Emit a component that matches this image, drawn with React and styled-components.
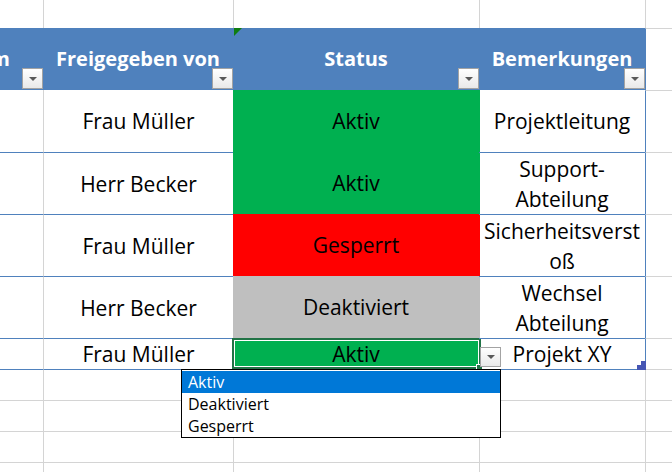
import React from "react";
import styled, { createGlobalStyle } from "styled-components";

const GRID = "#d4d4d4";
const BLUE = "#4f81bd";
const FILL = { Aktiv: "#00b050", Gesperrt: "#ff0000", Deaktiviert: "#bfbfbf" };

const rows = [
  { by: "Frau Müller", status: "Aktiv", note: ["Projektleitung"] },
  { by: "Herr Becker", status: "Aktiv", note: ["Support-", "Abteilung"] },
  { by: "Frau Müller", status: "Gesperrt", note: ["Sicherheitsverst", "oß"] },
  { by: "Herr Becker", status: "Deaktiviert", note: ["Wechsel", "Abteilung"] },
  { by: "Frau Müller", status: "Aktiv", note: ["Projekt XY"], selected: true },
];

const options = ["Aktiv", "Deaktiviert", "Gesperrt"];

export default function App() {
  return (
    <>
      <GlobalStyle />
      <Sheet>
        <Cell />
        <Cell $left={GRID} />
        <Cell $left={GRID} />
        <Cell $left={GRID} />
        <Cell $left={GRID} />

        <HeaderCell $clip>
          Datum
          <FilterButton />
        </HeaderCell>
        <HeaderCell>
          Freigegeben von
          <FilterButton />
        </HeaderCell>
        <HeaderCell>
          <Marker />
          Status
          <FilterButton />
        </HeaderCell>
        <HeaderCell>
          Bemerkungen
          <FilterButton />
        </HeaderCell>
        <Cell $left={BLUE} $top={GRID} />

        {rows.map((row, i) => {
          const line = i > 0 ? BLUE : null;
          return (
            <React.Fragment key={i}>
              <Cell $top={line} />
              <TextCell $left={GRID} $top={line}>
                {row.by}
              </TextCell>
              <StatusCell $fill={FILL[row.status]}>
                {row.status}
                {row.selected && (
                  <>
                    <Selection>
                      <FillHandle />
                    </Selection>
                    <ListButton />
                    <Dropdown>
                      {options.map((o, k) => (
                        <Option key={o} $active={k === 0}>
                          {o}
                        </Option>
                      ))}
                    </Dropdown>
                  </>
                )}
              </StatusCell>
              <TextCell $top={line}>
                {row.note.map((n) => (
                  <span key={n}>{n}</span>
                ))}
                {row.selected && (
                  <ResizeHandle viewBox="0 0 9 9" width="9" height="9">
                    <polygon points="4,0 9,0 9,9 0,9 0,4 4,4" fill="#4656b4" />
                  </ResizeHandle>
                )}
              </TextCell>
              <Cell $left={BLUE} $top={GRID} />
            </React.Fragment>
          );
        })}

        {[0, 1, 2, 3].map((r) => {
          const line = r === 0 ? BLUE : GRID;
          return (
            <React.Fragment key={"e" + r}>
              <Cell $top={line} />
              <Cell $left={GRID} $top={line} />
              <Cell $left={GRID} $top={line} />
              <Cell $left={GRID} $top={line} />
              <Cell $left={GRID} $top={GRID} />
            </React.Fragment>
          );
        })}
      </Sheet>
    </>
  );
}

const GlobalStyle = createGlobalStyle`
  html, body {
    margin: 0;
    padding: 0;
    background: #ffffff;
    overflow: hidden;
  }
  body {
    font-family: "Open Sans", "Noto Sans", sans-serif;
  }
`;

const Sheet = styled.div`
  display: grid;
  grid-template-columns: 43px 190px 246px 166px 27px;
  grid-template-rows: 28px 62px 62px 62px 62px 62px 31px 31px 31px 31px 31px;
  width: 672px;
  height: 472px;
  overflow: hidden;
  background: #ffffff;
`;

const Cell = styled.div`
  position: relative;
  box-sizing: border-box;
  min-width: 0;
  border-left: 1px solid ${(p) => p.$left || "transparent"};
  border-top: 1px solid ${(p) => p.$top || "transparent"};
  ${(p) => (!p.$left ? "border-left-width: 0;" : "")}
  ${(p) => (!p.$top ? "border-top-width: 0;" : "")}
`;

const HeaderCell = styled.div`
  position: relative;
  display: flex;
  align-items: center;
  justify-content: ${(p) => (p.$clip ? "flex-end" : "center")};
  padding-right: ${(p) => (p.$clip ? "33px" : "0")};
  overflow: hidden;
  white-space: nowrap;
  background: ${BLUE};
  color: #ffffff;
  font-weight: 700;
  font-size: 20px;
  line-height: 28px;
`;

const FilterButton = styled.span`
  position: absolute;
  right: 0;
  bottom: 1px;
  box-sizing: border-box;
  width: 21px;
  height: 21px;
  border: 1px solid #a3a3a3;
  background: linear-gradient(#ffffff, #e9e9e9);
  &::after {
    content: "";
    position: absolute;
    left: 6px;
    top: 8px;
    border-left: 4px solid transparent;
    border-right: 4px solid transparent;
    border-top: 4px solid #595959;
  }
`;

const Marker = styled.span`
  position: absolute;
  left: 1px;
  top: 0;
  width: 0;
  height: 0;
  border-top: 8px solid #0f7d10;
  border-right: 8px solid transparent;
`;

const TextCell = styled(Cell)`
  display: flex;
  flex-direction: column;
  align-items: center;
  justify-content: center;
  text-align: center;
  white-space: nowrap;
  font-size: 21px;
  line-height: 30px;
  color: #000000;
`;

const StatusCell = styled.div`
  position: relative;
  display: flex;
  align-items: center;
  justify-content: center;
  background: ${(p) => p.$fill};
  box-shadow: 1px 0 0 ${(p) => p.$fill};
  font-size: 21px;
  line-height: 30px;
  color: #000000;
`;

const Selection = styled.div`
  position: absolute;
  top: 0;
  left: -1px;
  right: -2px;
  bottom: 0;
  border: 2px solid #217346;
  box-shadow: inset 0 0 0 1px #ffffff;
  pointer-events: none;
`;

const FillHandle = styled.span`
  position: absolute;
  right: -3px;
  bottom: -3px;
  width: 5px;
  height: 5px;
  background: #217346;
  border-left: 1px solid #ffffff;
  border-top: 1px solid #ffffff;
`;

const ListButton = styled.span`
  position: absolute;
  left: 247px;
  top: 9px;
  box-sizing: border-box;
  width: 21px;
  height: 20px;
  border: 1px solid #a3a3a3;
  background: linear-gradient(#ffffff, #e9e9e9);
  z-index: 4;
  &::after {
    content: "";
    position: absolute;
    left: 6px;
    top: 7px;
    border-left: 4px solid transparent;
    border-right: 4px solid transparent;
    border-top: 4px solid #595959;
  }
`;

const Dropdown = styled.div`
  position: absolute;
  left: -52px;
  top: 31px;
  z-index: 5;
  box-sizing: border-box;
  width: 320px;
  padding-top: 1px;
  border: 1px solid #000000;
  background: #ffffff;
`;

const Option = styled.div`
  height: 22px;
  padding-left: 6px;
  font-size: 16px;
  line-height: 22px;
  color: ${(p) => (p.$active ? "#ffffff" : "#000000")};
  background: ${(p) => (p.$active ? "#0078d7" : "transparent")};
`;

const ResizeHandle = styled.svg`
  position: absolute;
  right: -1px;
  bottom: -1px;
  z-index: 3;
`;
